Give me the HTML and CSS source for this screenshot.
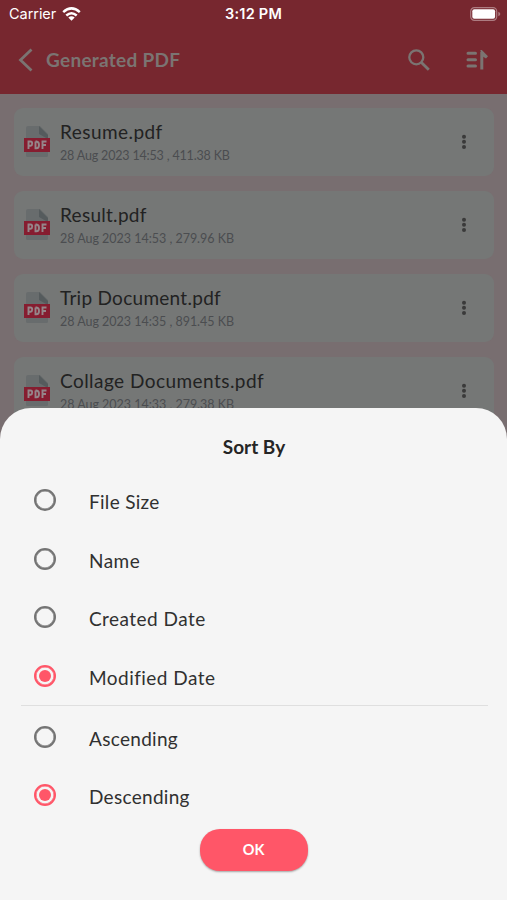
FILE: index.html
```html
<!DOCTYPE html>
<html lang="en">
<head>
<meta charset="utf-8">
<title>Generated PDF</title>
<link rel="stylesheet" href="styles.css">
</head>
<body>
<svg class="defs" width="0" height="0">
  <symbol id="pdf" viewBox="0 0 26 32">
    <path d="M4 0H16L24 8V30Q24 31 22 31H4Q2 31 2 30V2Q2 0 4 0Z" fill="#686c6d"/>
    <path d="M15 0L24 9V13L15 8Z" fill="#555b5d"/>
    <path d="M0 12H26V26H0Z" fill="#861d30"/>
    <g fill="none" stroke="#95868a" stroke-width="1.9"><path d="M4.5 23V15.5H6.5Q8.2 15.5 8.2 17.5T6.5 19.8H4.5M11.5 15.5V22.3H12.5Q15 22.3 15 19T12.5 15.5H11.5M18.5 23V15.5H22.5M18.5 19H22"/></g>
  </symbol>
  <symbol id="dots" viewBox="0 0 6 16"><g fill="#3a3a3a"><circle cx="3" cy="2.7" r="2"/><circle cx="3" cy="7.8" r="2"/><circle cx="3" cy="12.9" r="2"/></g></symbol>
</svg>
<div class="screen">
  <header class="top">
    <div class="status">
      <div class="carrier"><span>Carrier</span>
        <svg width="19" height="14" viewBox="0 0 19 14"><g fill="none" stroke="#fff" stroke-width="2.5"><path d="M1.2 5.1Q9.5 -2.3 17.8 5.1"/><path d="M4.3 8.5Q9.5 3.9 14.7 8.5"/></g><path d="M6.3 10.6Q9.5 7.9 12.7 10.6L9.5 13.8Z" fill="#fff"/></svg>
      </div>
      <div class="time">3:12 PM</div>
      <svg class="battery" width="31" height="14" viewBox="0 0 31 14"><rect x=".7" y=".7" width="26" height="12.6" rx="3.7" fill="none" stroke="#ad7c81" stroke-width="1.2"/><rect x="2.3" y="2.3" width="22.8" height="9.4" rx="2" fill="#fff"/><path d="M28.3 4.8Q30.3 5.6 30.3 7T28.3 9.2Z" fill="#ad7c81"/></svg>
    </div>
    <div class="bar">
      <svg class="back" width="16" height="24" viewBox="0 0 16 24"><path d="M13.5 1.5L2.5 12L13.5 22.5" fill="none" stroke="#7b7472" stroke-width="2.8"/></svg>
      <h1>Generated PDF</h1>
      <svg class="search" width="22" height="22" viewBox="0 0 22 22"><g fill="none" stroke="#7b7472" stroke-width="2.3"><circle cx="8.3" cy="8.3" r="7"/><path d="M13.4 13.4L20.8 20.8" stroke-width="2.8"/></g></svg>
      <svg width="22" height="20" viewBox="0 0 22 20"><g fill="none" stroke="#7b7472" stroke-width="3"><path d="M2 3.3H9.5M2 9.7H9.5M2 16H9.5" stroke-linecap="round"/><path d="M15.8 19.5V2"/></g><path d="M14.3 0H15.8L22 6.3L20 8.5L15.8 6Z" fill="#7b7472"/></svg>
    </div>
  </header>
  <main class="list">
    <article class="card"><svg class="pdf"><use href="#pdf"/></svg><div class="info"><h2>Resume.pdf</h2><p class="narrow">28 Aug 2023 14:53 , 411.38 KB</p></div><svg class="dots"><use href="#dots"/></svg></article>
    <article class="card"><svg class="pdf"><use href="#pdf"/></svg><div class="info"><h2 class="tight">Result.pdf</h2><p>28 Aug 2023 14:53 , 279.96 KB</p></div><svg class="dots"><use href="#dots"/></svg></article>
    <article class="card"><svg class="pdf"><use href="#pdf"/></svg><div class="info"><h2 class="tight">Trip Document.pdf</h2><p>28 Aug 2023 14:35 , 891.45 KB</p></div><svg class="dots"><use href="#dots"/></svg></article>
    <article class="card"><svg class="pdf"><use href="#pdf"/></svg><div class="info"><h2>Collage Documents.pdf</h2><p>28 Aug 2023 14:33 , 279.38 KB</p></div><svg class="dots"><use href="#dots"/></svg></article>
  </main>
  <section class="sheet">
    <h3>Sort By</h3>
    <div class="options">
      <div class="option"><i class="radio"></i><span class="tight">File Size</span></div>
      <div class="option"><i class="radio"></i><span>Name</span></div>
      <div class="option"><i class="radio"></i><span>Created Date</span></div>
      <div class="option"><i class="radio on"></i><span>Modified Date</span></div>
    </div>
    <hr>
    <div class="options">
      <div class="option"><i class="radio"></i><span class="tight">Ascending</span></div>
      <div class="option"><i class="radio on"></i><span class="tight">Descending</span></div>
    </div>
    <button class="ok">OK</button>
  </section>
</div>
</body>
</html>
```
FILE: styles.css
```css
* { box-sizing: border-box; }
body { margin: 0; font-family: Lato, "Liberation Sans", sans-serif; }
h1, h2, h3, p { margin: 0; }
svg { display: block; flex: none; }
.defs { position: absolute; }
.screen { position: relative; width: 507px; height: 900px; overflow: hidden; background: #786e70; }
.top { height: 94px; background: #77272f; }
.status { height: 27px; display: grid; grid-template-columns: 1fr auto 1fr; align-items: center; padding: 0 6px 0 9px; color: #fff; font: 14.5px/27px Inter, sans-serif; }
.carrier { display: flex; align-items: center; gap: 6px; }
.carrier span { letter-spacing: -.05px; }
.time { font-weight: 600; font-size: 14.5px; letter-spacing: .25px; margin: 0 3px 0 0; }
.battery { justify-self: end; }
.bar { height: 66px; display: flex; align-items: center; padding: 0 19px 0 18px; }
.bar h1 { flex: 1; margin: -1px 0 0 12px; font-size: 19px; font-weight: 700; letter-spacing: .28px; color: #7b7472; }
.search { margin-right: 36px; }
.list { padding: 14px 13px 0 14px; display: flex; flex-direction: column; gap: 15px; }
.card { height: 68px; border-radius: 9px; background: #757776; display: flex; align-items: center; padding: 0 27px 0 10px; }
.pdf { width: 26px; height: 32px; }
.info { flex: 1; margin-left: 10px; padding-bottom: 1px; }
.info h2 { font-size: 19px; line-height: 25px; font-weight: 400; letter-spacing: .45px; color: #222; }
.info h2.tight { letter-spacing: .28px; }
.info p { font-size: 12.5px; line-height: 20px; margin-top: 2px; margin-bottom: -1px; letter-spacing: -.02px; color: #4b4d50; }
.info p.narrow { letter-spacing: -.17px; }
.dots { width: 6px; height: 16px; }
.sheet { position: absolute; left: 0; right: 0; bottom: 0; height: 492px; padding: 25px 19px 0 21px; background: #f5f5f5; border-radius: 31px 31px 0 0; display: flex; flex-direction: column; }
.sheet h3 { text-align: center; font-size: 19px; line-height: 27px; font-weight: 700; color: #252525; margin: 0 1px 11px 0; }
.option { height: 58.6px; display: flex; align-items: center; padding-left: 13px; }
.radio { width: 22px; height: 22px; flex: none; border: 2.5px solid #747474; border-radius: 50%; display: grid; place-items: center; box-shadow: inset 0 0 0 .5px #747474; }
.radio.on { border-color: #ff5668; box-shadow: inset 0 0 0 .5px #ff5668; }
.radio.on::after { content: ""; width: 12px; height: 12px; border-radius: 50%; background: #ff5668; }
.option span { margin-left: 33px; padding-top: 3px; font-size: 19px; letter-spacing: .46px; color: #303030; }
.option span.tight { letter-spacing: .3px; }
.sheet hr { width: 467px; height: 1px; margin: 0 0 1px; border: 0; background: #dfdfdf; flex: none; }
.ok { align-self: center; width: 108px; height: 42px; margin: 4px 2px 0 0; border: 0; border-radius: 20px; background: #ff5668; box-shadow: 0 1px 2px #0005; color: #fff; font: 700 14.5px Lato, sans-serif; }
```
